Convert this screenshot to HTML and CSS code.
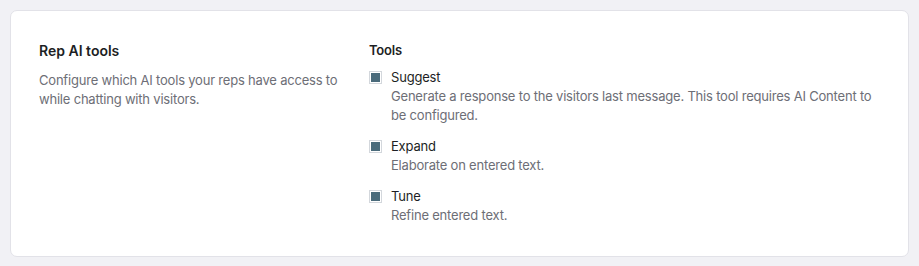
FILE: index.html
```html
<!DOCTYPE html>
<html lang="en">
<head>
  <meta charset="UTF-8">
  <title>Rep AI tools</title>
  <link rel="stylesheet" href="styles.css">
</head>
<body>
  <div class="card">
    <div class="intro">
      <h3>Rep AI tools</h3>
      <p>Configure which AI tools your reps have access to while chatting with visitors.</p>
    </div>

    <div class="tools">
      <div class="tools-title">Tools</div>

      <label class="tool">
        <span class="check"><span></span></span>
        <span class="tool-text">
          <span class="tool-name">Suggest</span>
          <span class="tool-desc">Generate a response to the visitors last message. This tool requires AI Content to be configured.</span>
        </span>
      </label>

      <label class="tool">
        <span class="check"><span></span></span>
        <span class="tool-text">
          <span class="tool-name">Expand</span>
          <span class="tool-desc">Elaborate on entered text.</span>
        </span>
      </label>

      <label class="tool">
        <span class="check"><span></span></span>
        <span class="tool-text">
          <span class="tool-name">Tune</span>
          <span class="tool-desc">Refine entered text.</span>
        </span>
      </label>
    </div>
  </div>
</body>
</html>
```

FILE: styles.css
```css
body {
  margin: 0;
  padding: 10px;
  background: #f1f1f5;
  font-family: Inter, "Noto Sans", sans-serif;
  font-size: 13px;
  letter-spacing: -0.2px;
  color: #1f2328;
}
.card {
  background: white;
  border: 1px solid #e2e2e8;
  border-radius: 7px;
  padding: 30px 28px 31px 28px;
  display: flex;
  gap: 30px;
}
.intro {
  width: 300px;
  flex-shrink: 0;
}
.intro h3 {
  margin: 0 0 10px 0;
  font-size: 14px;
  font-weight: 600;
  line-height: 20px;
  letter-spacing: 0;
  color: #1d1f24;
}
.intro p {
  margin: 0;
  color: #6d6e76;
  line-height: 19px;
}
.tools {
  flex: 1;
  padding-right: 6px;
}
.tools-title {
  font-weight: 600;
  font-size: 13px;
  line-height: 18px;
  color: #1d1f24;
  margin-bottom: 8px;
}
.tool {
  display: flex;
  gap: 9px;
  margin-bottom: 11px;
}
.tool:last-child {
  margin-bottom: 0;
}
.check {
  width: 9px;
  height: 9px;
  border: 1px solid #d3d7dc;
  padding: 1px;
  margin-top: 4px;
  flex-shrink: 0;
  background: white;
}
.check span {
  display: block;
  width: 9px;
  height: 9px;
  background: #4a6b7b;
}
.tool-text {
  display: flex;
  flex-direction: column;
}
.tool-name {
  line-height: 20px;
  color: #1d1f24;
}
.tool-desc {
  line-height: 19px;
  color: #6d6e76;
}
```
